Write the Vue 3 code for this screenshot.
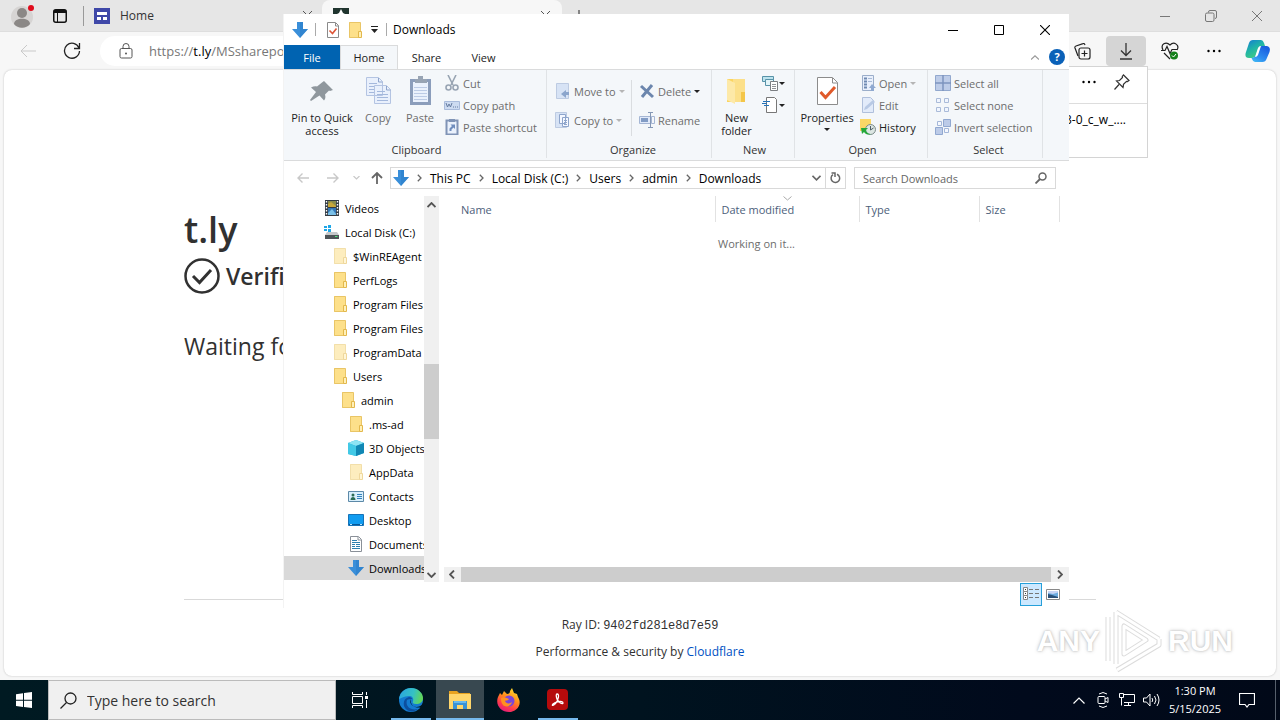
<script setup>
const arrowDown = '<path d="M5 0h6v7h5l-8 9-8-9h5z" fill="#3a8fd9"/><path d="M8 0h3v7h5l-8 9z" fill="#2b7fca" opacity=".6"/>'
const folder = '<path d="M2 0h11l1 5v11H2z" fill="#fbe08c"/><path d="M2.500.5H13.500V15.500H2.500z" fill="#fde08a" stroke="#e9c566"/><path d="M11.500 9.500h3v6h-3z" fill="#fff0b8" stroke="#e3b84c"/>'
const icons = {
  down: arrowDown,
  folder,
  faded: `<g opacity=".55">${folder}</g>`,
  video: '<path d="M1 0h14v16H1z" fill="#333b44"/><path d="M4 1h8v6H4z" fill="#8b8d4a"/><path d="M4 8h8v7H4z" fill="#3478b8"/><path d="M4 4l3-2 5 4v1H4z" fill="#c8a83b"/><path d="M4 13l4-4 4 5v1H4z" fill="#7ac0e8"/><path d="M2.500 1v15M13.500 1v15" stroke="#fff" stroke-width="1.400" stroke-dasharray="1.500 1.500"/>',
  disk: '<path d="M0 2h3v2H0zM4 1h3v3H4zM0 5h3v2H0zM4 5h3v3H4z" fill="#1ea7e8"/><path d="M3 8h10l2 3H1z" fill="#c5c8ca"/><path d="M1 11h14v4H1z" fill="#4d5357"/><path d="M11 12.500h2.500" stroke="#4fe07b"/>',
  cube: '<path d="M0 3l8-3 8 3v10l-8 3-8-2z" fill="#27b4d8"/><path d="M0 3l8-3 8 3-8 3z" fill="#8de4f4"/><path d="M8 6l8-3v10l-8 3z" fill="#1187b4"/><path d="M0 3l8 3v10l-8-2z" fill="#42c9e6"/>',
  contacts: '<path d="M.5 3.500h15v10H.5z" fill="#d8effc" stroke="#5c89a8"/><circle cx="5" cy="7" r="1.500" fill="#2b6c54"/><path d="M2.500 12c0-4 5-4 5 0z" fill="#2b6c54"/><path d="M9 6.500h5M9 8.500h5M9 10.500h5" stroke="#3483bd"/>',
  desktop: '<path d="M.5 2.500h15v11H.5z" fill="#119cf0" stroke="#1673b8"/><path d="M1 12.500h14" stroke="#075797"/><path d="M2 12.500h2M12 12.500h2" stroke="#b8e5ff"/>',
  doc: '<path d="M2.500.5h8l3 3v12h-11z" fill="#fff" stroke="#8a9098"/><path d="M10 1v3h3" fill="none" stroke="#8a9098"/><path d="M4 4.500h5M4 6.500h8M4 8.500h3M8 8.500h4M4 10.500h3M8 10.500h4M4 12.500h8" stroke="#2d7fae"/>',
  cut: '<g fill="none" stroke="#98a4b3" stroke-width="1.600"><path d="M4 0l5 10M12 0L7 10"/><circle cx="4.500" cy="12.500" r="2.500"/><circle cx="11.500" cy="12.500" r="2.500"/></g>',
  path: '<path d="M.5 4.500h15v8H.5z" fill="#cddbf1" stroke="#a9bbdb"/><path d="M2 6l1.500 4L5 7l1.500 3L8 6" fill="none" stroke="#657ba0"/><path d="M9 10h1M11 10h1M13 10h1" stroke="#657ba0"/>',
  shortcut: '<path d="M2.500 1.500h11v14h-11z" fill="#eaf1fc" stroke="#8094b6" stroke-width="2"/><path d="M5 0h6v3H5z" fill="#8094b6"/><path d="M5.500 12V9.500L8 7 6.500 5.500H11V10L9.500 8.500 7.500 10.500V12z" fill="#6f8dbd"/>',
  move: '<path d="M1.500.5h12v15h-12z" fill="#d7e3f5" stroke="#bdcbe2"/><path d="M14 9v3h-3v3l-5-4 5-4v2z" fill="#8ba5cc"/>',
  copyto: '<path d="M.5.5h11v15H.5z" fill="#d7e3f5" stroke="#bdcbe2"/><path d="M4.500 2.500h6v9h-6zM7.500 5.500h6v9h-6z" fill="#f5f8ff" stroke="#8ea5cb"/><path d="M9 8.500h3M9 10.500h3M9 12.500h3" stroke="#8ea5cb"/>',
  del: '<path d="M2 3l12 11M13 2L3 14" stroke="#6c86ad" stroke-width="3"/>',
  rename: '<path d="M.5 4.500h12v7H.5z" fill="#e1eafa" stroke="#a5b6d4"/><path d="M2 6h7v4H2z" fill="#829cc5"/><path d="M9 .5h5M11.500 1v14M9 15.500h5" stroke="#8497b5"/><path d="M13 4.500h2.500v7H13" fill="none" stroke="#a5b6d4"/>',
  newitem: '<path d="M.5 1.500h11v5H.5z" fill="#bde3ee" stroke="#5893a8"/><path d="M3.500 4.500h8v6h-8z" fill="#e3f4f8" stroke="#5893a8"/><path d="M8.500 6.500h7v9h-7z" fill="#fff" stroke="#7c7f83"/><path d="M10 9.500h4M10 11.500h4M10 13.500h4" stroke="#909397"/>',
  easy: '<path d="M4.500.5h8l2 2v13h-10z" fill="#fff" stroke="#777"/><path d="M1 4.500h7M0 6.500h5M2 8.500h5" stroke="#2472b8"/>',
  open: '<path d="M2.500.5h11v15h-11z" fill="#e9f0fc" stroke="#9baeca"/><path d="M4 3.500h3M4 6.500h3M4 9.500h3M4 12.500h3" stroke="#6f89b1" stroke-width="2"/><path d="M8 3.500h4M8 6.500h4" stroke="#a8bad6"/><path d="M11 16v-3H9l3-4 4 4h-2v3z" fill="#8fa9d1"/>',
  edit: '<path d="M2.500.5h8l3 3v12h-11z" fill="#e2ebfa" stroke="#b0c0dc"/><path d="M4 13l1-3 8-7 2 2-8 7z" fill="#b8c9e5"/>',
  history: '<path d="M0 0h11v12H0z" fill="#fbd766"/><circle cx="10.500" cy="10.500" r="5" fill="#dce6e3" stroke="#7b8a89"/><path d="M10.500 7v4l3-2" fill="none" stroke="#52616a"/><path d="M1 9l1 6 2-2c2 3 5 3 7 2-3 0-5-2-5-4l2-2z" fill="#26a83a"/>',
  selall: '<path d="M.5.500h15v15H.5z" fill="#bdcce8" stroke="#92a8ce"/><path d="M8 0v16M0 8h16" stroke="#7d94be" stroke-width="1.500"/>',
  selnone: '<path d="M1.500 1.500h4v4h-4zM9.500 1.500h4v4h-4zM1.500 10.500h4v4h-4zM9.500 10.500h4v4h-4z" fill="#f0f5fe" stroke="#aabbd9"/>',
  invert: '<path d="M2.500 2.500h4v4h-4zM9.500 9.500h4v4h-4z" fill="#f5f8fe" stroke="#a4b7d9"/><path d="M8.500.5h7v7h-7zM.5 8.500h7v7h-7z" fill="#bccbe8" stroke="#91a8d0"/>',
}
const tree = [
  ['video', 'Videos', 0],
  ['disk', 'Local Disk (C:)', 0],
  ['faded', '$WinREAgent', 1],
  ['folder', 'PerfLogs', 1],
  ['folder', 'Program Files', 1],
  ['folder', 'Program Files (x86)', 1],
  ['faded', 'ProgramData', 1],
  ['folder', 'Users', 1],
  ['folder', 'admin', 2],
  ['folder', '.ms-ad', 3],
  ['cube', '3D Objects', 3],
  ['faded', 'AppData', 3],
  ['contacts', 'Contacts', 3],
  ['desktop', 'Desktop', 3],
  ['doc', 'Documents', 3],
  ['down', 'Downloads', 3],
]
const crumbs = ['This PC', 'Local Disk (C:)', 'Users', 'admin', 'Downloads']
</script>

<template>
  <div class="desktop">
    <section class="browser">
      <header class="tabstrip">
        <button class="plain avatar" aria-label="Profile">
          <svg width="26" height="26" viewBox="0 0 26 26"><circle cx="11" cy="14" r="11" fill="#d6d4d3" /><circle cx="11" cy="10" r="5" fill="#8b8886" /><path d="M3 21c0-7 16-7 16 0-4 5-12 5-16 0z" fill="#8b8886" /><circle cx="20" cy="5" r="3" fill="#e00b1c" /></svg>
        </button>
        <button class="plain tabmenu" aria-label="Tab actions">
          <svg width="14" height="14" viewBox="0 0 14 14"><rect x=".75" y=".75" width="12.500" height="12.500" rx="2" fill="none" stroke="#111" stroke-width="1.500" /><path d="M1 2.500h12" stroke="#111" stroke-width="3" /><path d="M4.500 3v10" stroke="#111" /></svg>
        </button>
        <span class="strip-sep"></span>
        <a href="#" class="tab">
          <svg width="16" height="16" viewBox="0 0 16 16"><path d="M0 0h16v16H0z" fill="#3f48a8" /><path d="M3 4h10v3H3zM3 9h4v3H3zM9 9h4v3H9z" fill="#fff" /></svg>
          <span>Home</span>
          <svg class="tab-x" width="9" height="9" viewBox="0 0 9 9"><path d="M0 0l9 9M9 0L0 9" stroke="#555" /></svg>
        </a>
        <a href="#" class="tab active">
          <svg width="16" height="16" viewBox="0 0 16 16"><path d="M0 0h16v16H0z" fill="#20352f" /><path d="M8 1l2 4 4 2-5 2-1 6-1-6-5-2 4-2z" fill="#fff" /></svg>
          <span>Just a moment...</span>
          <svg class="tab-x" width="9" height="9" viewBox="0 0 9 9"><path d="M0 0l9 9M9 0L0 9" stroke="#555" /></svg>
        </a>
        <button class="plain plus" aria-label="New tab"><svg width="12" height="12" viewBox="0 0 12 12"><path d="M6 0v12M0 6h12" stroke="#222" /></svg></button>
        <div class="win-controls">
          <button class="plain" aria-label="Minimize browser"><svg width="12" height="12" viewBox="0 0 12 12"><path d="M1 6.500h10" stroke="#777" /></svg></button>
          <button class="plain" aria-label="Restore browser"><svg width="12" height="12" viewBox="0 0 12 12"><path d="M3.500 2.500V2Q3.500.5 5 .5h5Q11.500.5 11.500 2v5Q11.500 8.500 10 8.500" fill="none" stroke="#777" /><rect x=".5" y="3" width="8.500" height="8.500" rx="1.500" fill="none" stroke="#777" /></svg></button>
          <button class="plain" aria-label="Close browser"><svg width="12" height="12" viewBox="0 0 12 12"><path d="M1 1l10 10M11 1L1 11" stroke="#777" /></svg></button>
        </div>
      </header>

      <div class="toolbar">
        <button class="plain tool" aria-label="Back"><svg width="16" height="14" viewBox="0 0 16 14"><path d="M16 7H1M7 1L1 7l6 6" fill="none" stroke="#c9c9c9" /></svg></button>
        <button class="plain tool" aria-label="Refresh"><svg width="18" height="18" viewBox="0 0 18 18"><path d="M16 6A7.500 7.500 0 1 0 16.500 9M16.500 1v5.500H11" fill="none" stroke="#222" stroke-width="1.300" /></svg></button>
        <div class="url">
          <svg width="14" height="16" viewBox="0 0 14 16"><rect x="1" y="5.500" width="12" height="9.500" rx="1.500" fill="none" stroke="#555" /><path d="M4 5V3.500a3 3 0 0 1 6 0V5" fill="none" stroke="#555" /><circle cx="7" cy="10.500" r="1" fill="#555" /></svg>
          <span>https://<b>t.ly</b>/MSsharepo</span>
        </div>
        <div class="tools">
          <button class="plain tool" aria-label="Collections"><svg width="17" height="17" viewBox="0 0 17 17"><g fill="none" stroke="#222" stroke-width="1.200"><path d="M4 13L1 5Q.5 3.500 2 3l7-2.400Q10.500 0 11 2" /><rect x="5" y="5" width="11" height="11" rx="2" /><path d="M10.500 7.500v6M7.500 10.500h6" /></g></svg></button>
          <button class="plain tool pressed" aria-label="Downloads"><svg width="14" height="17" viewBox="0 0 14 17"><path d="M7 0v12M2 7.500l5 5 5-5M1 16h12" fill="none" stroke="#333" stroke-width="1.300" /></svg></button>
          <button class="plain tool" aria-label="Browser essentials"><svg width="18" height="18" viewBox="0 0 18 18"><path d="M2 8C-1 2 5-1 9 3c4-4 10 0 7 5M0 8.500h4l2-4 3 7 2-4h5M3 11l6 6" fill="none" stroke="#222" stroke-width="1.200" /><circle cx="13" cy="13.500" r="4" fill="#15801b" /><path d="M11 13.500l1.500 1.500 2.500-3" fill="none" stroke="#fff" /></svg></button>
          <button class="plain tool" aria-label="Settings and more"><svg width="14" height="4" viewBox="0 0 14 4"><circle cx="1.500" cy="2" r="1.200" /><circle cx="7" cy="2" r="1.200" /><circle cx="12.500" cy="2" r="1.200" /></svg></button>
          <button class="plain tool" aria-label="Copilot"><svg width="26" height="24" viewBox="0 0 26 24">
            <defs>
              <linearGradient id="cpa" x1="0" y1="0" x2=".6" y2="1"><stop offset="0" stop-color="#1579d5" /><stop offset=".5" stop-color="#1fb3a8" /><stop offset="1" stop-color="#45cf7f" /></linearGradient>
              <linearGradient id="cpb" x1=".6" y1="0" x2="0" y2="1"><stop offset="0" stop-color="#1a5fe0" /><stop offset=".6" stop-color="#2e8ef0" /><stop offset="1" stop-color="#45c2f5" /></linearGradient>
            </defs>
            <path d="M8 1h8q2 0 3 3l1 3h-4q-2 0-3 3l-2 6q-1 3-4 3H4q-5 0-3-6L4 4q1-3 4-3z" fill="url(#cpa)" /><path d="M18 23h-8q-2 0-3-3l-.5-1q3 0 4.500-3l2-6q1-3 4-3h5q4 1 2.500 6l-3 7q-1 3-4 3z" fill="url(#cpb)" /><path d="M13 9q1-2 3-2l-3 9q-1 2-3 2z" fill="#fff" />
          </svg></button>
          <aside class="dl-popup">
            <div class="dl-head">
              <svg width="14" height="4" viewBox="0 0 14 4"><circle cx="1.500" cy="2" r="1.200" /><circle cx="7" cy="2" r="1.200" /><circle cx="12.500" cy="2" r="1.200" /></svg>
              <svg width="16" height="16" viewBox="0 0 16 16"><path d="M9.500 1l5.500 5.500-1.500 1-1-.2-3 3L9 13.500 2.500 7l3-.5 3-3-.2-1zM5 10.500L.5 15.500" fill="none" stroke="#333" stroke-width="1.200" /></svg>
            </div>
            <p>3-0_c_w_....</p>
          </aside>
        </div>
      </div>

      <main class="page">
        <div class="challenge">
          <h1>t.ly</h1>
          <p class="verify">
            <svg width="36" height="36" viewBox="0 0 36 36"><circle cx="18" cy="18" r="16.500" fill="none" stroke="#313131" stroke-width="2.500" /><path d="M9 18l6.500 6.500L27 12" fill="none" stroke="#313131" stroke-width="3" /></svg>
            <span>Verified</span>
          </p>
          <p class="waiting">Waiting for</p>
          <footer>
            <p>Ray ID: <code>9402fd281e8d7e59</code></p>
            <p>Performance &amp; security by <a href="#">Cloudflare</a></p>
          </footer>
        </div>
        <div class="watermark">
          <span>ANY</span>
          <svg width="58" height="64" viewBox="0 0 58 64"><path d="M3 8v44M11 3v52M11 3l43 27M19 17v28l22-14zM12 61l42-25v-6" fill="none" stroke="#dcdcdc" stroke-width="5" stroke-linejoin="round" /><path d="M3 8v44M11 3v52M11 3l43 27M19 17v28l22-14zM12 61l42-25v-6" fill="none" stroke="#fff" stroke-width="3" stroke-linejoin="round" /></svg>
          <span>RUN</span>
        </div>
      </main>
    </section>

    <section class="explorer">
      <header class="titlebar">
        <svg class="t-arrow" width="16" height="16" viewBox="0 0 16 16" v-html="icons.down"></svg>
        <i class="t-sep"></i>
        <button class="plain" aria-label="Quick properties"><svg width="14" height="16" viewBox="0 0 14 16"><path d="M1.500.5h8l3 3v12h-11z" fill="#fff" stroke="#8a8a8a" /><path d="M9.500 1v3h3" fill="none" stroke="#8a8a8a" /><path d="M3.500 8.500l3 3 4-5" fill="none" stroke="#dd5436" stroke-width="1.600" /></svg></button>
        <button class="plain" aria-label="Quick new folder"><svg width="16" height="16" viewBox="0 0 16 16" v-html="icons.folder"></svg></button>
        <button class="plain" aria-label="Customize toolbar"><svg width="9" height="7" viewBox="0 0 9 7"><path d="M1 .5h7" stroke="#222" /><path d="M1 3h7L4.500 7z" fill="#222" /></svg></button>
        <i class="t-sep"></i>
        <span class="t-name">Downloads</span>
        <div class="win-controls">
          <button class="plain" aria-label="Minimize"><svg width="10" height="10" viewBox="0 0 10 10"><path d="M0 5.500h10" stroke="#000" /></svg></button>
          <button class="plain" aria-label="Maximize"><svg width="10" height="10" viewBox="0 0 10 10"><path d="M.5.5h9v9h-9z" fill="none" stroke="#000" /></svg></button>
          <button class="plain" aria-label="Close"><svg width="10" height="10" viewBox="0 0 10 10"><path d="M0 0l10 10M10 0L0 10" stroke="#000" stroke-width="1.100" /></svg></button>
        </div>
      </header>

      <nav class="tabs">
        <button class="file">File</button>
        <button class="home">Home</button>
        <button>Share</button>
        <button>View</button>
        <div class="tabs-right">
          <button class="plain" aria-label="Collapse ribbon"><svg width="8" height="5" viewBox="0 0 8 5"><path d="M0 4.500L4 .8l4 3.700" fill="none" stroke="#999" stroke-width="1.200" /></svg></button>
          <button class="help" aria-label="Help">?</button>
        </div>
      </nav>

      <div class="ribbon">
        <section class="group clip">
          <div class="gbody">
            <button class="big pin"><svg width="32" height="32" viewBox="0 0 32 32"><path d="M18 6l9 9-3 1-1-.5-4 4c1 3 0 5-1 6l-4.500-5L5 26l-1-1 6-8-5-4.500c2-1 4-1.500 6-1l5-4z" fill="#8f979d" /></svg>Pin to Quick access</button>
            <button class="big dim"><svg width="32" height="32" viewBox="0 0 32 32"><path d="M4.500 2.500h12l4 4v14h-16zM12.500 10.500h12l4 4v14h-16z" fill="#e9f0fc" stroke="#b4c4e2" /><path d="M16.500 3v4h4M24.500 11v4h4" fill="none" stroke="#8fa5cc" /><path d="M7 8.500h8M7 11.500h5M7 14.500h5M7 17.500h5M15 16.500h8M15 19.500h11M15 22.500h11M15 25.500h11" stroke="#a4b8dc" /></svg>Copy</button>
            <button class="big dim"><svg width="32" height="32" viewBox="0 0 32 32"><path d="M7.500 5.500h18v23h-18z" fill="#eaf1fd" stroke="#8b9dbb" stroke-width="3" /><path d="M11 4h3V1h5v3h4v4H11z" fill="#98a4b4" /><path d="M10 12.500h13M10 15.500h13M10 18.500h13M10 21.500h13M10 24.500h13" stroke="#bccbe6" /></svg>Paste</button>
            <div class="stack">
              <button class="small dim"><svg width="16" height="16" viewBox="0 0 16 16" v-html="icons.cut"></svg>Cut</button>
              <button class="small dim"><svg width="16" height="16" viewBox="0 0 16 16" v-html="icons.path"></svg>Copy path</button>
              <button class="small dim"><svg width="16" height="16" viewBox="0 0 16 16" v-html="icons.shortcut"></svg>Paste shortcut</button>
            </div>
          </div>
          <h2>Clipboard</h2>
        </section>
        <section class="group org">
          <div class="gbody">
            <div class="stack two">
              <button class="small dim"><svg width="16" height="16" viewBox="0 0 16 16" v-html="icons.move"></svg>Move to<i class="caret"></i></button>
              <button class="small dim"><svg width="16" height="16" viewBox="0 0 16 16" v-html="icons.copyto"></svg>Copy to<i class="caret"></i></button>
            </div>
            <i class="inner-sep"></i>
            <div class="stack two">
              <button class="small dim"><svg width="16" height="16" viewBox="0 0 16 16" v-html="icons.del"></svg>Delete<i class="caret dark"></i></button>
              <button class="small dim"><svg width="16" height="16" viewBox="0 0 16 16" v-html="icons.rename"></svg>Rename</button>
            </div>
          </div>
          <h2>Organize</h2>
        </section>
        <section class="group new">
          <div class="gbody">
            <button class="big"><svg width="32" height="32" viewBox="0 0 32 32"><path d="M6 4h15v18l3 1v4H6z" fill="#fbd561" /><path d="M12 4h12v23H12z" fill="#fce08a" /><path d="M6 4l8 4v21l-8-4z" fill="#fde9a8" /><path d="M20 17h4v10h-4z" fill="#f4c649" /></svg>New folder</button>
            <div class="stack">
              <button class="small" aria-label="New item"><svg width="16" height="16" viewBox="0 0 16 16" v-html="icons.newitem"></svg><i class="caret dark"></i></button>
              <button class="small" aria-label="Easy access"><svg width="16" height="16" viewBox="0 0 16 16" v-html="icons.easy"></svg><i class="caret dark"></i></button>
            </div>
          </div>
          <h2>New</h2>
        </section>
        <section class="group opn">
          <div class="gbody">
            <button class="big"><svg width="32" height="32" viewBox="0 0 32 32"><path d="M6.500 2.500h15l5 5v22h-20z" fill="#fff" stroke="#8c8c8c" /><path d="M21.500 3v5h5" fill="none" stroke="#8c8c8c" /><path d="M9.500 17l5 5.500L24 12" fill="none" stroke="#e05a2b" stroke-width="3" /></svg>Properties<i class="caret dark"></i></button>
            <div class="stack">
              <button class="small dim"><svg width="16" height="16" viewBox="0 0 16 16" v-html="icons.open"></svg>Open<i class="caret"></i></button>
              <button class="small dim"><svg width="16" height="16" viewBox="0 0 16 16" v-html="icons.edit"></svg>Edit</button>
              <button class="small"><svg width="16" height="16" viewBox="0 0 16 16" v-html="icons.history"></svg>History</button>
            </div>
          </div>
          <h2>Open</h2>
        </section>
        <section class="group sel">
          <div class="gbody">
            <div class="stack">
              <button class="small dim"><svg width="16" height="16" viewBox="0 0 16 16" v-html="icons.selall"></svg>Select all</button>
              <button class="small dim"><svg width="16" height="16" viewBox="0 0 16 16" v-html="icons.selnone"></svg>Select none</button>
              <button class="small dim"><svg width="16" height="16" viewBox="0 0 16 16" v-html="icons.invert"></svg>Invert selection</button>
            </div>
          </div>
          <h2>Select</h2>
        </section>
      </div>

      <div class="address-row">
        <button class="plain nav" aria-label="Go back"><svg width="12" height="10" viewBox="0 0 12 10"><path d="M12 5H1M5.500.5L1 5l4.500 4.500" fill="none" stroke="#c8c8c8" stroke-width="1.400" /></svg></button>
        <button class="plain nav" aria-label="Go forward"><svg width="12" height="10" viewBox="0 0 12 10"><path d="M0 5h11M6.500.5L11 5 6.500 9.500" fill="none" stroke="#c8c8c8" stroke-width="1.400" /></svg></button>
        <button class="plain recent" aria-label="Recent locations"><svg width="7" height="4" viewBox="0 0 7 4"><path d="M.5 0l3 3 3-3" fill="none" stroke="#c8c8c8" stroke-width="1.200" /></svg></button>
        <button class="plain up" aria-label="Up"><svg width="12" height="12" viewBox="0 0 12 12"><path d="M6 12V1M1 6l5-5 5 5" fill="none" stroke="#666" stroke-width="1.800" /></svg></button>
        <div class="crumbs">
          <svg width="16" height="16" viewBox="0 0 16 16" v-html="icons.down"></svg>
          <template v-for="c in crumbs" :key="c">
            <svg class="chev" width="5" height="8" viewBox="0 0 5 8"><path d="M.8.800L4 4 .8 7.200" fill="none" stroke="#666" stroke-width="1.300" /></svg>
            <a href="#">{{ c }}</a>
          </template>
          <span class="grow"></span>
          <button class="plain drop" aria-label="Previous locations"><svg width="9" height="6" viewBox="0 0 9 6"><path d="M.5.8l4 4 4-4" fill="none" stroke="#666" stroke-width="1.600" /></svg></button>
          <button class="plain refresh" aria-label="Refresh folder"><svg width="11" height="12" viewBox="0 0 11 12"><path d="M7 2.200A4.300 4.300 0 1 1 3 2.600M1.500 1h3.500v4" fill="none" stroke="#666" stroke-width="1.500" /></svg></button>
        </div>
        <label class="search">
          <input type="text" placeholder="Search Downloads" aria-label="Search Downloads" />
          <svg width="12" height="12" viewBox="0 0 12 12"><circle cx="7.500" cy="4.500" r="3.500" fill="none" stroke="#666" stroke-width="1.500" /><path d="M5 7L.5 11.500" stroke="#666" stroke-width="1.800" /></svg>
        </label>
      </div>

      <div class="panes">
        <ul class="tree">
          <li v-for="([icon, name, level]) in tree" :key="name" :class="['l' + level, { chosen: name === 'Downloads' }]">
            <svg width="16" height="16" viewBox="0 0 16 16" v-html="icons[icon]"></svg><span>{{ name }}</span>
          </li>
        </ul>
        <div class="vbar">
          <svg width="9" height="6" viewBox="0 0 9 6"><path d="M.5 5l4-4 4 4" fill="none" stroke="#555" stroke-width="1.800" /></svg>
          <div class="vtrack"><i></i></div>
          <svg width="9" height="6" viewBox="0 0 9 6"><path d="M.5 1l4 4 4-4" fill="none" stroke="#555" stroke-width="1.800" /></svg>
        </div>
        <div class="list">
          <table>
            <thead><tr><th class="c-name">Name</th><th class="c-date"><svg width="9" height="5" viewBox="0 0 9 5"><path d="M.5.5l4 3.500 4-3.500" fill="none" stroke="#aaa" /></svg>Date modified</th><th class="c-type">Type</th><th class="c-size">Size</th><th class="c-end"></th></tr></thead>
          </table>
          <p class="working">Working on it...</p>
          <div class="hbar">
            <svg width="6" height="9" viewBox="0 0 6 9"><path d="M5 .5l-4 4 4 4" fill="none" stroke="#555" stroke-width="1.800" /></svg>
            <i></i>
            <svg width="6" height="9" viewBox="0 0 6 9"><path d="M1 .5l4 4-4 4" fill="none" stroke="#555" stroke-width="1.800" /></svg>
          </div>
        </div>
      </div>

      <footer class="status">
        <button class="view-on" aria-label="Details view"><svg width="16" height="14" viewBox="0 0 16 14"><path d="M.5.500h4v4h-4zM.5 4.500h4v4h-4zM.5 8.500h4v4h-4z" fill="#fff" stroke="#888" /><path d="M2 2.500h1M2 6.500h1M2 10.500h1" stroke="#333" /><path d="M6 2.500h4M12 2.500h4M6 6.500h4M12 6.500h4M6 10.500h4M12 10.500h4" stroke="#777" /></svg></button>
        <button class="plain" aria-label="Large icons view"><svg width="14" height="11" viewBox="0 0 14 11"><path d="M.5.500h13v10H.5z" fill="#fff" stroke="#888" /><path d="M2 2h10v7H2z" fill="#6baade" /><path d="M2 5l4 1 6 2v1H2z" fill="#294f77" /><path d="M2 2h10v1.500L7 5 2 4z" fill="#c6d4f5" /></svg></button>
      </footer>
    </section>

    <footer class="taskbar">
      <button class="plain start" aria-label="Start"><svg width="16" height="16" viewBox="0 0 16 16"><path d="M0 2.300L7 1.200v6.500H0zM8 1l8-1v7.700H8zM0 8.700h7v6.300l-7-1zM8 8.700h8V16l-8-1z" fill="#fff" /></svg></button>
      <label class="tsearch">
        <svg width="17" height="17" viewBox="0 0 17 17"><circle cx="10.500" cy="6.500" r="5.500" fill="none" stroke="#222" stroke-width="1.300" /><path d="M6.500 10.500L.5 16.500" stroke="#222" stroke-width="1.300" /></svg>
        <input type="text" placeholder="Type here to search" aria-label="Type here to search" />
      </label>
      <div class="apps">
        <button class="plain app" aria-label="Task view"><svg width="17" height="16" viewBox="0 0 17 16"><path d="M.5 0v2.500h10V0M.5 16v-2.500h10V16M.5 4.500h10v7H.5zM14.500 0v3M14.500 8v8" fill="none" stroke="#fff" /><path d="M13 4h3v3h-3z" fill="#fff" /></svg></button>
        <button class="plain app run" aria-label="Microsoft Edge"><svg width="24" height="24" viewBox="0 0 24 24">
          <defs><linearGradient id="eg" x1="0" y1=".2" x2="1" y2=".4"><stop offset="0" stop-color="#2aa5e0" /><stop offset=".6" stop-color="#35c1c4" /><stop offset="1" stop-color="#63d657" /></linearGradient></defs>
          <circle cx="12" cy="12" r="12" fill="#147bd0" /><path d="M0 11C1 4 6 0 12 0c7 0 12 5 12 10 0 4-3 6-7 6-3 0-4-1-3-3 1-3-1-5-4-5-5 0-9 3-10 3z" fill="url(#eg)" /><path d="M8 12c-2 6 3 11 11 9-5 4-12 3-14-3-1-5 1-8 5-9 2 0 3 1 3 2-2 0-4 0-5 1z" fill="#0c4f9f" /><path d="M12 11c-2 3 0 7 5 8 3 0 5-1 7-4l1 4-3 1c-2-1-3 0-6-1s-5-4-4-8z" fill="#001620" />
        </svg></button>
        <button class="plain app run current" aria-label="File Explorer"><svg width="22" height="20" viewBox="0 0 22 20"><path d="M0 1h8l2 2h11v5H0z" fill="#e8a320" /><path d="M0 4h22v15H0z" fill="#ffd66b" /><path d="M4 11h14v8h-4v-4H8v4H4z" fill="#3a92d5" /><path d="M5 11h12v2H5z" fill="#69b9ed" /></svg></button>
        <button class="plain app" aria-label="Firefox"><svg width="24" height="24" viewBox="0 0 24 24">
          <defs><linearGradient id="ff" x1=".8" y1="0" x2=".3" y2="1"><stop offset="0" stop-color="#ffe22e" /><stop offset=".45" stop-color="#ff8a1c" /><stop offset=".75" stop-color="#ff3b4c" /><stop offset="1" stop-color="#e31b7b" /></linearGradient></defs>
          <path d="M3 5l2 2 2-4 3 3c2 0 3-1 3-3l2-3 2 5 3 1 1 3c5 8-2 15-9 15C4 24-2 17 1 9z" fill="url(#ff)" /><circle cx="12" cy="13" r="5.500" fill="#7a45d8" /><path d="M4 10c3-2 6 0 8 1-1 2-3 1-4 2 1 3 5 3 7 1-1 4-6 6-9 3-2-2-2-5-2-7z" fill="#ff9020" />
        </svg></button>
        <button class="plain app run" aria-label="Acrobat Reader"><svg width="22" height="22" viewBox="0 0 22 22"><rect width="21" height="21" rx="4" fill="#b50b0c" /><path d="M10 5c3 0 1 6-1 9s-5 3-3 1 10-4 10-1c0 2-5-1-6-4S9 5 10 5z" fill="none" stroke="#fff" stroke-width="1.300" /></svg></button>
      </div>
      <div class="tray">
        <button class="plain" aria-label="Hidden icons"><svg width="12" height="7" viewBox="0 0 12 7"><path d="M.5 6.500L6 1l5.500 5.500" fill="none" stroke="#fff" stroke-width="1.200" /></svg></button>
        <button class="plain" aria-label="Meet now"><svg width="14" height="16" viewBox="0 0 14 16"><path d="M3 2Q7-1 11 2M3 14Q7 17 11 14" fill="none" stroke="#fff" /><rect x="2" y="4.500" width="7" height="7" rx="1" fill="none" stroke="#fff" /><path d="M9 7l3-1.500v5L9 9" fill="none" stroke="#fff" /></svg></button>
        <button class="plain" aria-label="Network"><svg width="16" height="14" viewBox="0 0 16 14"><path d="M5 1.500h10.500v8H5M.5.5h4v4h-4zM2.500 4.500v8M5 12.500h7M9.500 10v2" fill="none" stroke="#fff" /></svg></button>
        <button class="plain" aria-label="Volume"><svg width="17" height="14" viewBox="0 0 17 14"><path d="M.5 5h3l3.500-4v12L3.500 9h-3zM9 5q1.500 2 0 4M11.500 3q3 4 0 8M14 1q4 6 0 12" fill="none" stroke="#fff" /></svg></button>
        <div class="clock"><span>1:30 PM</span><span>5/15/2025</span></div>
        <button class="plain notify" aria-label="Notifications"><svg width="16" height="16" viewBox="0 0 16 16"><path d="M.5 1.500h15v11H10l-2 2.500-2-2.500H.5z" fill="none" stroke="#fff" stroke-width="1.200" /></svg></button>
        <i class="peek"></i>
      </div>
    </footer>
  </div>
</template>

<style>
body { margin: 0; overflow: hidden; }
</style>

<style scoped>
* { box-sizing: border-box; }
.desktop { position: relative; display: flex; flex-direction: column; height: 100vh; font-family: "Open Sans", "Noto Sans", sans-serif; font-size: 12px; color: #000; background: #f7f7f7; overflow: hidden; }
button { font: inherit; color: inherit; padding: 0; border: 0; background: none; }
.plain { display: flex; align-items: center; justify-content: center; }
a { color: inherit; text-decoration: none; }
p, h1, h2, ul { margin: 0; padding: 0; }
svg { flex: none; display: block; }
input { font: inherit; border: 0; outline: 0; background: none; min-width: 0; flex: 1; padding: 0; }

.browser { flex: 1; display: flex; flex-direction: column; min-height: 0; }
.tabstrip { height: 32px; flex: none; display: flex; align-items: center; background: #e6e6e6; border-bottom: 1px solid #dedede; }
.avatar { width: 26px; margin-left: 11px; }
.tabmenu { width: 14px; margin-left: 16px; }
.strip-sep { width: 1px; height: 20px; margin: 0 10px 0 16px; background: #999; }
.tab { display: flex; align-items: center; gap: 10px; width: 228px; height: 32px; padding-right: 10px; color: #333; }
.tab.active { width: 240px; padding: 0 12px 0 11px; background: #f7f7f7; border-radius: 8px 8px 0 0; }
.tab.active span { padding-top: 6px; }
.tab-x { margin-left: auto; }
.plus { margin-left: 11px; }
.win-controls { display: flex; align-self: stretch; margin-left: auto; }
.win-controls button { width: 46px; }

.toolbar { height: 38px; flex: none; display: flex; align-items: center; padding-left: 6px; background: #f7f7f7; }
.tool { width: 44px; height: 30px; border-radius: 4px; }
.url { display: flex; align-items: center; gap: 16px; flex: 1; height: 30px; margin-left: 6px; padding-left: 19px; border-radius: 15px; background: #fff; font-size: 13px; color: #777; }
.url b { font-weight: 400; color: #000; }
.tools { position: relative; display: flex; margin-left: 40px; }
.tools .tool.pressed { width: 40px; margin: 0 2px; background: #d5d5d5; }
.tools .tool:last-of-type { width: 44px; }
.dl-popup { position: absolute; z-index: 1; top: 30px; right: 132px; width: 340px; height: 92px; background: #fff; border: 1px solid #d4d4d4; }
.dl-head { height: 37px; display: flex; align-items: center; justify-content: flex-end; gap: 18px; padding: 0 17px 6px 0; border-bottom: 1px solid #ddd; }
.dl-popup p { padding: 7px 21px 0 0; text-align: right; line-height: 18px; }

.page { position: relative; flex: 1; margin: 0 4px 4px; background: #fff; border-radius: 8px; box-shadow: 0 0 2px #bbb; display: flex; flex-direction: column; padding: 136px 180px 0; color: #313131; min-height: 0; }
.challenge { flex: 1; display: flex; flex-direction: column; }
h1 { font-size: 36px; line-height: 48px; font-weight: 600; }
.verify { display: flex; align-items: center; gap: 6px; font-size: 23px; font-weight: 600; line-height: 36px; margin-top: 4px; }
.waiting { margin-top: 34px; font-size: 23px; line-height: 36px; }
.challenge footer { margin-top: auto; padding: 12px 0 11px; border-top: 1px solid #d9d9d9; text-align: center; font-size: 12px; line-height: 26px; }
code { font-family: "Liberation Mono", monospace; font-size: 12px; }
.challenge footer a { color: #0051c3; }
.watermark { position: absolute; right: 43px; bottom: 3px; display: flex; align-items: center; gap: 5px; font-family: "Liberation Sans Narrow", "Liberation Sans", sans-serif; font-size: 30px; font-weight: 700; color: #fff; text-shadow: 0 0 2px #bbb, 0 0 4px #ccc; }

.explorer { position: absolute; z-index: 2; left: 283px; right: 211px; top: 14px; display: flex; flex-direction: column; background: #fff; border-left: 1px solid #f3f3f3; font-size: 11px; }
.titlebar { height: 31px; display: flex; align-items: center; padding: 0 1px 0 8px; }
.t-sep { width: 1px; height: 13px; margin: 0 10px 0 7px; background: #aaa; }
.titlebar > .plain { margin-right: 7px; }
.titlebar > .plain + .t-sep { margin: 0 6px 0 0; }
.t-name { font-size: 12px; }
.tabs { height: 24px; display: flex; }
.tabs > button { width: 57px; border: 1px solid transparent; border-bottom: 0; color: #222; }
.tabs > .file { width: 56px; color: #fff; background: #0063b1; }
.tabs > .home { width: 58px; background: #f4f7fa; border-color: #dadbdc; }
.tabs-right { display: flex; align-items: center; gap: 10px; margin-left: auto; padding-right: 4px; }
.help { width: 16px; height: 16px; border-radius: 50%; background: #0a61b8; color: #fff; font-weight: 700; line-height: 16px; }
.ribbon { display: flex; height: 92px; background: #f4f7fa; border: 1px solid #dadbdc; border-width: 1px 0; }
.group { display: flex; flex-direction: column; padding: 2px 0 0; border-right: 1px solid #e0e3e6; margin: 0 0 2px; }
.gbody { display: flex; flex: 1; }
.group h2 { font-size: 11px; font-weight: 400; line-height: 16px; text-align: center; color: #333; }
.clip { width: 263px; padding-left: 3px; }
.org { width: 165px; padding-left: 8px; }
.new { width: 83px; padding-left: 3px; }
.opn { width: 133px; padding-left: 3px; }
.sel { width: 115px; padding-left: 7px; }
.big { display: flex; flex-direction: column; align-items: center; width: 42px; line-height: 13px; padding-top: 3px; color: #222; }
.big svg { margin-bottom: 4px; }
.big.pin { width: 70px; }
.new .big { width: 43px; }
.opn .big { width: 58px; }
.stack { display: flex; flex-direction: column; margin-left: 3px; }
.org .stack, .sel .stack { margin: 0; }
.new .stack, .opn .stack { margin-left: 4px; }
.stack.two { padding-top: 8px; gap: 7px; }
.small { display: flex; align-items: center; gap: 3px; height: 22px; white-space: nowrap; color: #222; }
.small.dim, .big.dim { color: #6d6d6d; }
.caret { border: 3px solid transparent; border-top-color: #b5b5b5; border-bottom: 0; }
.caret.dark { border-top-color: #222; }
.small[aria-label] .caret { margin-left: -2px; }
.big .caret { margin: 4px 0 0; }
.inner-sep { width: 1px; height: 56px; margin: 8px 7px 0 auto; background: #dadde0; }
.org .stack:last-child { width: 72px; }

.address-row { display: flex; align-items: center; height: 34px; }
.nav { width: 30px; margin: 0; }
.nav:first-child { margin-left: 4px; }
.recent { width: 17px; }
.up { width: 24px; }
.crumbs { display: flex; align-items: center; flex: 1; height: 22px; margin-left: 1px; padding-left: 2px; border: 1px solid #d9d9d9; white-space: nowrap; font-size: 12px; }
.crumbs .chev { margin: 0 8px; }
.grow { flex: 1; }
.drop { width: 17px; height: 20px; }
.refresh { width: 20px; height: 20px; border-left: 1px solid #d9d9d9; }
.search { display: flex; align-items: center; width: 202px; height: 22px; margin: 0 13px 0 8px; padding: 0 8px; border: 1px solid #d9d9d9; }
.search input::placeholder { color: #666; opacity: 1; }

.panes { display: flex; height: 387px; padding-top: 1px; }
.tree { width: 140px; list-style: none; overflow: hidden; }
.tree li { display: flex; align-items: center; gap: 5px; height: 24px; white-space: nowrap; }
.l0 { padding-left: 40px; }
.l1 { padding-left: 48px; }
.l2 { padding-left: 56px; }
.l3 { padding-left: 64px; }
.chosen { background: #d9d9d9; }
.vbar { display: flex; flex-direction: column; align-items: center; width: 15px; padding: 6px 0 4px; background: #f0f0f0; }
.vtrack { flex: 1; align-self: stretch; display: flex; flex-direction: column; }
.vtrack i { height: 75px; margin-top: 156px; background: #cdcdcd; }
.list { flex: 1; min-width: 0; display: flex; flex-direction: column; margin-left: 5px; }
table { width: 100%; border-collapse: collapse; table-layout: fixed; }
th { height: 26px; padding: 0 6px; font-weight: 400; text-align: left; color: #4c607a; border-right: 1px solid #e2e2e2; }
.c-name { padding-left: 17px; }
.c-date { position: relative; width: 144px; }
.c-date svg { position: absolute; top: 0; left: 67px; }
.c-type { width: 120px; }
.c-size { width: 80px; }
.c-end { width: 10px; padding: 0; border: 0; }
.working { margin-top: 12px; text-align: center; line-height: 20px; color: #6d6d6d; }
.hbar { display: flex; align-items: center; margin-top: auto; height: 15px; padding: 0 6px 0 5px; gap: 6px; background: #f0f0f0; }
.hbar i { flex: 1; height: 15px; background: #cdcdcd; }
.status { display: flex; align-items: center; justify-content: flex-end; gap: 4px; height: 26px; padding: 0 9px 2px 0; }
.view-on { width: 22px; height: 23px; display: flex; align-items: center; justify-content: center; background: #cce8ff; border: 1px solid #26a0da; }

.taskbar { position: relative; z-index: 3; display: flex; height: 40px; flex: none; color: #fff; background: linear-gradient(90deg, #001a22, #00131f 50%, #010a1c 80%, #010918); }
.start { width: 48px; }
.tsearch { display: flex; align-items: center; gap: 10px; width: 288px; padding-left: 11px; background: #f0f0f0; border: 1px solid #bbb; }
.tsearch input { font-size: 14px; }
.tsearch input::placeholder { color: #333; opacity: 1; }
.apps { display: flex; gap: 1px; }
.app { width: 48px; position: relative; }
.app:first-child { margin-right: 2px; }
.run::after { content: ""; position: absolute; left: 4px; right: 4px; bottom: 0; height: 2px; background: #76b9ed; }
.current { background: #384850; }
.current::after { left: 0; right: 0; }
.tray { display: flex; margin-left: auto; }
.tray button { width: 24px; }
.clock { display: flex; flex-direction: column; align-items: center; justify-content: center; width: 64px; line-height: 18px; font-size: 11px; }
.tray .notify { width: 40px; }
.peek { width: 5px; margin-left: 8px; border-left: 1px solid #56606c; }
</style>
